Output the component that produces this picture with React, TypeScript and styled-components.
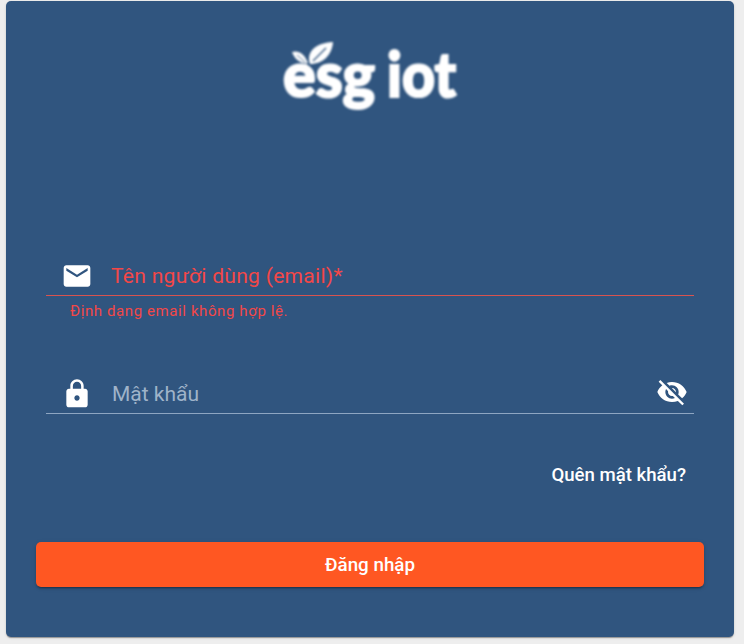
import React from 'react';
import styled, { createGlobalStyle } from 'styled-components';

const GlobalStyle = createGlobalStyle`
  html, body {
    margin: 0;
    padding: 0;
    background: #eeeeee;
    font-family: Roboto, "Liberation Sans", sans-serif;
  }
`;

const EMAIL_ICON =
  'M20 4H4c-1.1 0-1.99.9-1.99 2L2 18c0 1.1.9 2 2 2h16c1.1 0 2-.9 2-2V6c0-1.1-.9-2-2-2zm0 4l-8 5-8-5V6l8 5 8-5v2z';
const LOCK_ICON =
  'M18 8h-1V6c0-2.76-2.24-5-5-5S7 3.24 7 6v2H6c-1.1 0-2 .9-2 2v10c0 1.1.9 2 2 2h12c1.1 0 2-.9 2-2V10c0-1.1-.9-2-2-2zm-6 9c-1.1 0-2-.9-2-2s.9-2 2-2 2 .9 2 2-.9 2-2 2zm3.1-9H8.9V6c0-1.71 1.39-3.1 3.1-3.1 1.71 0 3.1 1.39 3.1 3.1v2z';
const EYE_OFF_ICON =
  'M12 7c2.76 0 5 2.24 5 5 0 .65-.13 1.26-.36 1.83l2.92 2.92c1.51-1.26 2.7-2.89 3.43-4.75-1.73-4.39-6-7.5-11-7.5-1.4 0-2.74.25-3.98.7l2.16 2.16C10.74 7.13 11.35 7 12 7zM2 4.27l2.28 2.28.46.46C3.08 8.3 1.78 10.02 1 12c1.73 4.39 6 7.5 11 7.5 1.55 0 3.03-.3 4.38-.84l.42.42L19.73 22 21 20.73 3.27 3 2 4.27zM7.53 9.8l1.55 1.55c-.05.21-.08.43-.08.65 0 1.66 1.34 3 3 3 .22 0 .44-.03.65-.08l1.55 1.55c-.67.33-1.41.53-2.2.53-2.76 0-5-2.24-5-5 0-.79.2-1.53.53-2.2zm4.31-.78l3.15 3.15.02-.16c0-1.66-1.34-3-3-3l-.17.01z';

const Icon: React.FC<{ d: string }> = ({ d }) => (
  <IconSvg viewBox="0 0 24 24">
    <path d={d} />
  </IconSvg>
);

const Logo: React.FC = () => (
  <LogoSvg viewBox="-20 -10 220 90" width="220" height="90">
    <g fill="#fff">
      <path d="M12 12c6-2 12 1 16 11-7 1-13-3-16-11z" />
      <path d="M30 24c-4-11 4-21 23-22-1 13-10 22-23 22z" />
      <path d="M33 21l13-13" stroke="#30557f" strokeWidth="1.2" />
      <path d="M17 15l8 7" stroke="#30557f" strokeWidth="0.8" />
      <path d="M26 23l3 5h-5z" />
      <LogoText x="3" y="57" textLength="92" lengthAdjust="spacingAndGlyphs">esg</LogoText>
      <LogoText x="107" y="57" textLength="69" lengthAdjust="spacingAndGlyphs">iot</LogoText>
    </g>
  </LogoSvg>
);

const App: React.FC = () => {
  return (
    <Page>
      <GlobalStyle />
      <Card>
        <LogoBox>
          <Logo />
        </LogoBox>
        <Form>
          <Field>
            <Row hasError>
              <Icon d={EMAIL_ICON} />
              <Label hasError>Tên người dùng (email)*</Label>
            </Row>
            <ErrorText>Định dạng email không hợp lệ.</ErrorText>
          </Field>
          <Field>
            <Row>
              <Icon d={LOCK_ICON} />
              <Label>Mật khẩu</Label>
              <EyeButton>
                <Icon d={EYE_OFF_ICON} />
              </EyeButton>
            </Row>
          </Field>
        </Form>
        <ForgotRow>
          <ForgotLink>Quên mật khẩu?</ForgotLink>
        </ForgotRow>
        <SubmitButton>Đăng nhập</SubmitButton>
      </Card>
    </Page>
  );
};

const Page = styled.div`
  width: 744px;
  height: 644px;
  padding: 1px 10px 7px 6px;
  box-sizing: border-box;
  overflow: hidden;
`;

const Card = styled.div`
  height: 636px;
  box-sizing: border-box;
  padding: 0 30px;
  background: #30557f;
  border-radius: 5px;
  box-shadow: 0 2px 1px -1px rgba(0, 0, 0, 0.2), 0 1px 1px 0 rgba(0, 0, 0, 0.14),
    0 1px 3px 0 rgba(0, 0, 0, 0.12);
`;

const LogoBox = styled.div`
  display: flex;
  justify-content: center;
  padding-top: 29px;
  height: 90px;
`;

const LogoSvg = styled.svg`
  display: block;
  filter: blur(0.9px);
`;

const LogoText = styled.text`
  font-family: Lato, "Open Sans", sans-serif;
  font-size: 63px;
  font-weight: 900;
  stroke: #ffffff;
  stroke-width: 2.2px;
`;

const Form = styled.div`
  display: flex;
  flex-direction: column;
  gap: 56px;
  margin-top: 138px;
  padding: 0 10px;
`;

const Field = styled.div`
  display: flex;
  flex-direction: column;
`;

const Row = styled.div<{ hasError?: boolean }>`
  display: flex;
  align-items: center;
  height: 36px;
  padding: 0 6px 1px 14.5px;
  border-bottom: 1px solid ${props => (props.hasError ? '#d9534f' : '#8ea6c2')};
`;

const IconSvg = styled.svg`
  display: block;
  flex: none;
  width: 32px;
  height: 32px;
  fill: #ffffff;
`;

const Label = styled.span<{ hasError?: boolean }>`
  flex: 1;
  margin-left: ${props => (props.hasError ? '18.5px' : '19.5px')};
  font-size: 21px;
  line-height: 32px;
  letter-spacing: ${props => (props.hasError ? '0.3px' : '0')};
  color: ${props => (props.hasError ? '#f44747' : '#9fb3c9')};
`;

const EyeButton = styled.span`
  display: block;
  margin-bottom: 4px;
`;

const ErrorText = styled.p`
  margin: 6px 0 0 24px;
  font-size: 15px;
  line-height: 18px;
  letter-spacing: 0.6px;
  color: #f44747;
`;

const ForgotRow = styled.div`
  display: flex;
  justify-content: flex-end;
  margin-top: 49px;
  padding-right: 18px;
`;

const ForgotLink = styled.a`
  font-size: 18.6px;
  font-weight: 500;
  line-height: 24px;
  color: #ffffff;
`;

const SubmitButton = styled.button`
  display: block;
  width: 100%;
  height: 45px;
  margin-top: 55px;
  border: 0;
  border-radius: 5px;
  background: #ff5722;
  color: #ffffff;
  font-family: inherit;
  font-size: 18.8px;
  font-weight: 500;
  box-shadow: 0 3px 1px -2px rgba(0, 0, 0, 0.2), 0 2px 2px 0 rgba(0, 0, 0, 0.14),
    0 1px 5px 0 rgba(0, 0, 0, 0.12);
`;

export default App;
